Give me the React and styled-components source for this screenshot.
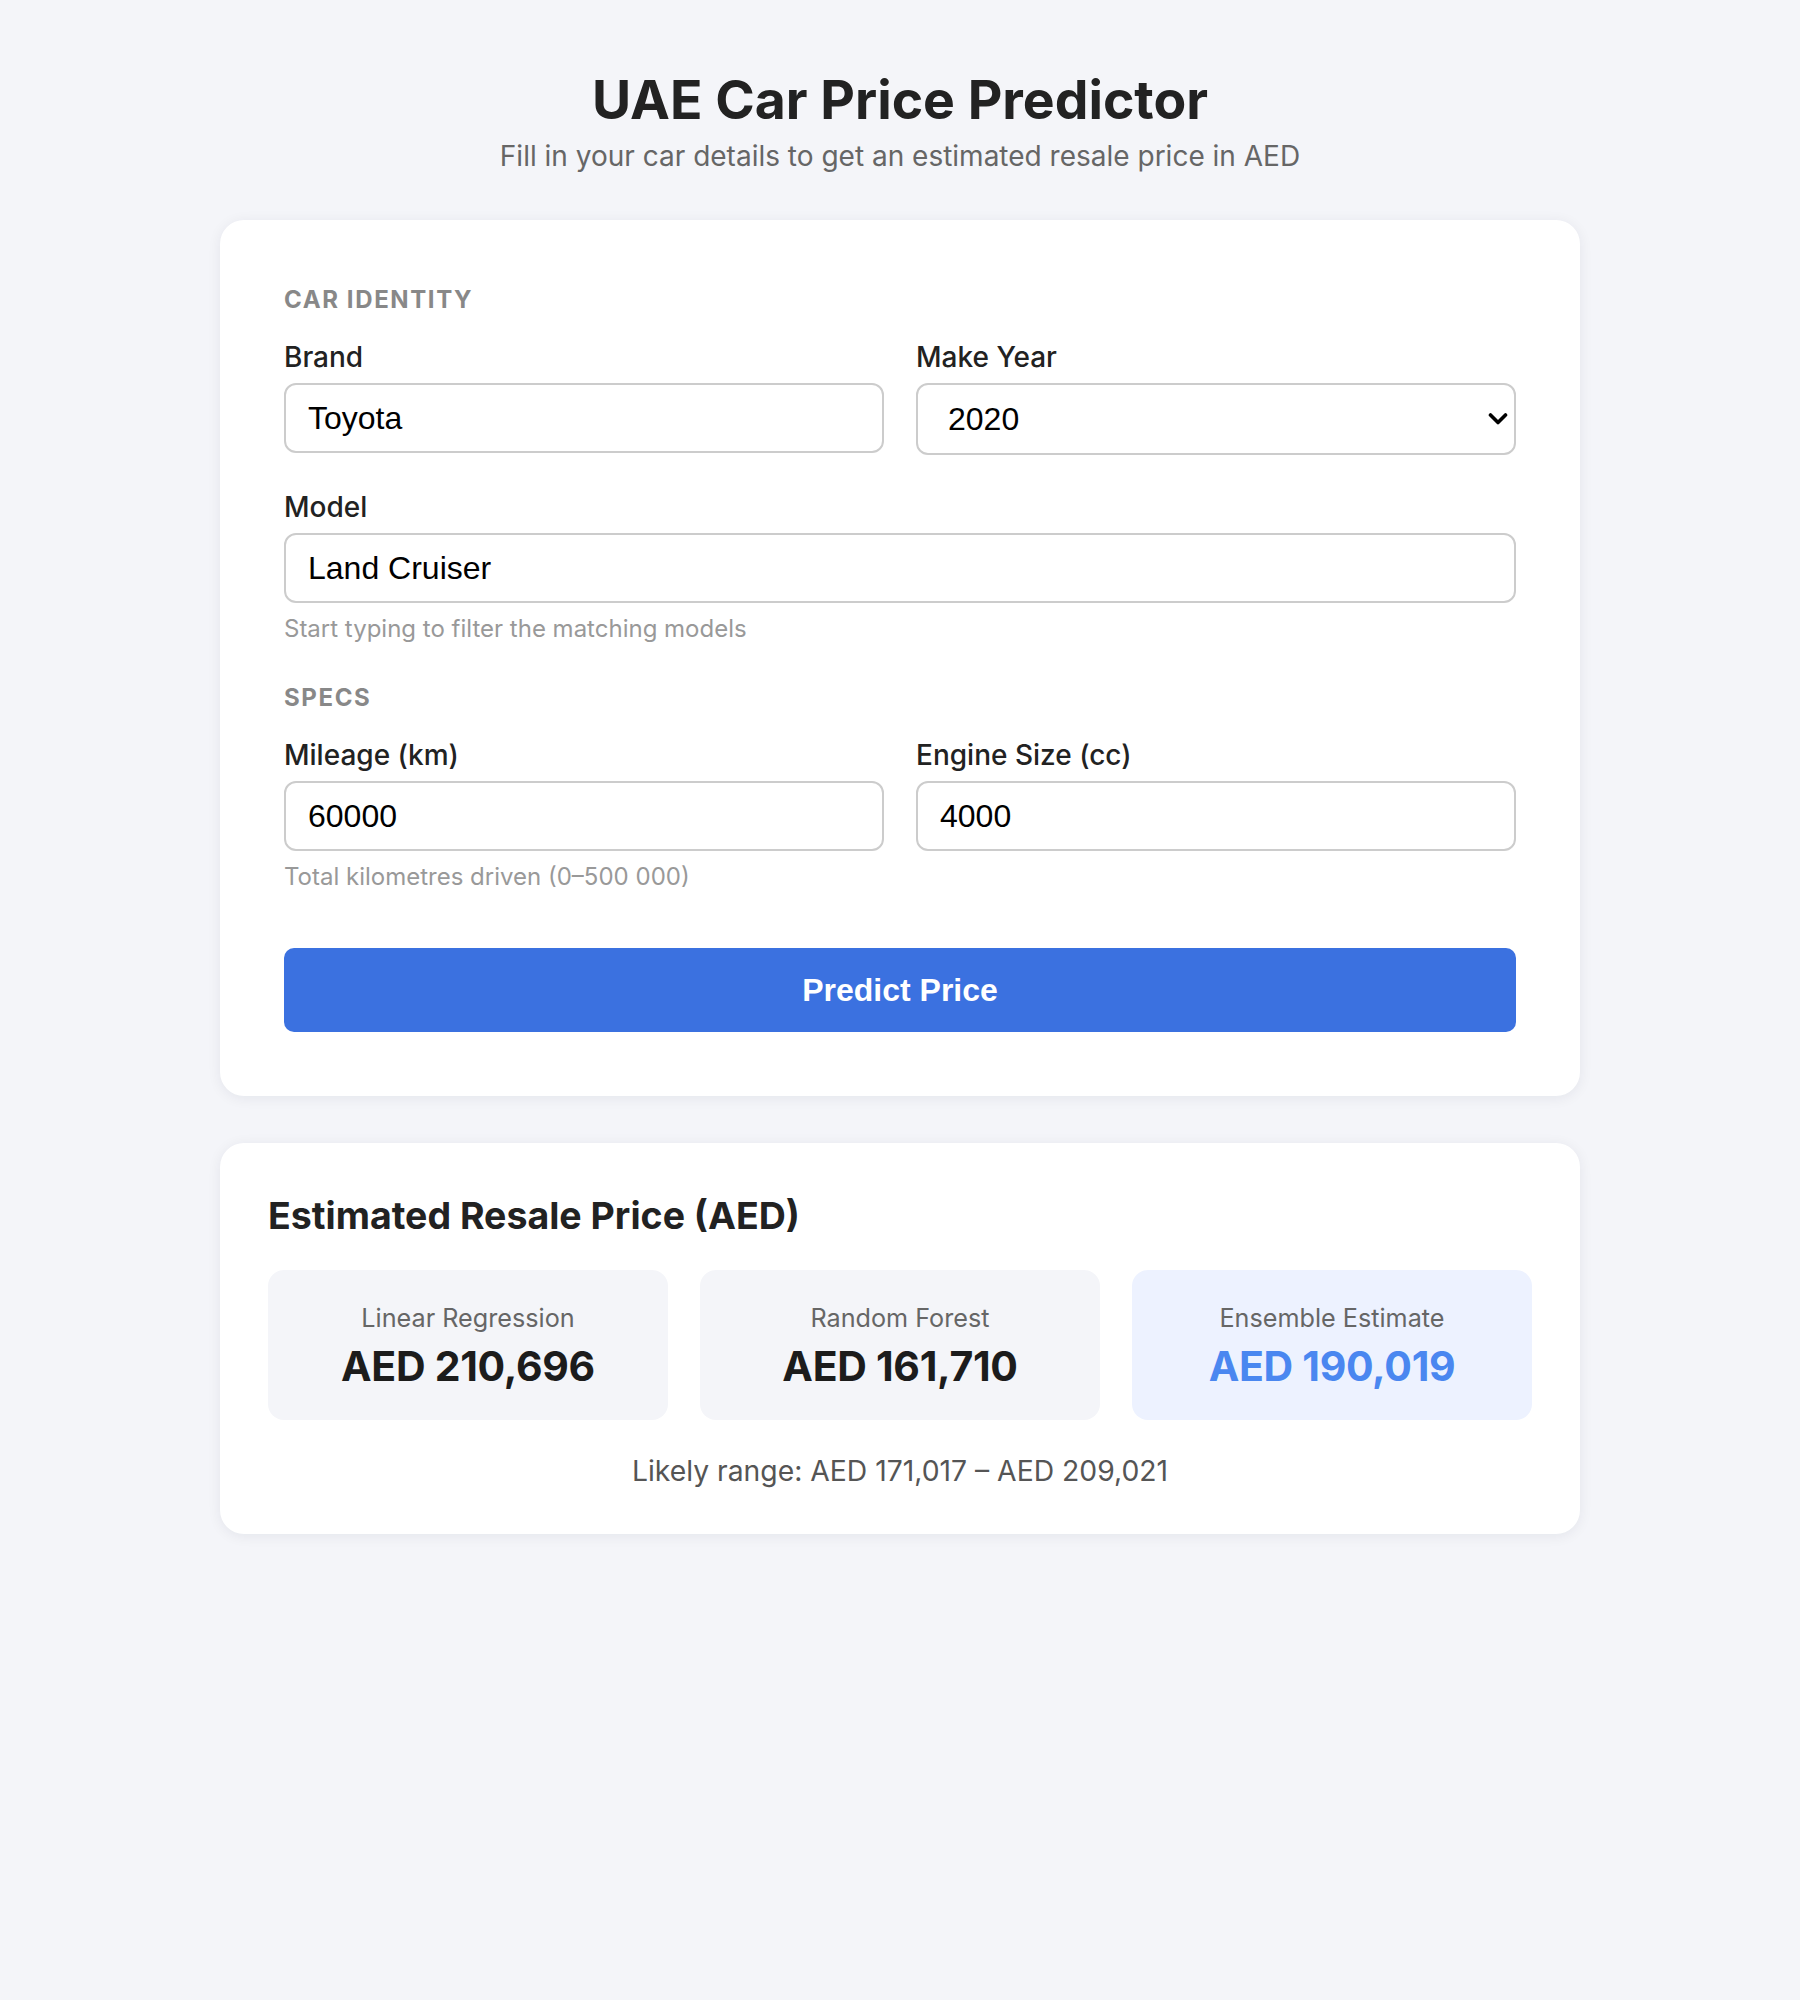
import React from "react";
import styled, { createGlobalStyle } from "styled-components";

const GlobalStyle = createGlobalStyle`
  html, body {
    margin: 0;
    padding: 0;
    background: #f4f5f9;
  }
  body {
    font-family: Inter, "Noto Sans", "Liberation Sans", sans-serif;
    color: #222;
    min-height: 2000px;
  }
  * { box-sizing: border-box; }
`;

const Page = styled.main`
  width: 1360px;
  margin: 0 auto;
  padding: 68px 0 80px;
`;

const Header = styled.header`
  text-align: center;
  margin-bottom: 47px;
`;

const Title = styled.h1`
  margin: 0;
  font-size: 53.5px;
  line-height: 63px;
  font-weight: 700;
  color: #222;
  letter-spacing: 0;
`;

const Subtitle = styled.p`
  margin: 8px 0 0;
  font-size: 28px;
  line-height: 34px;
  color: #666;
`;

const Card = styled.section`
  background: #fff;
  border-radius: 24px;
  box-shadow: 0 2px 14px rgba(20, 30, 60, 0.07);
  padding: ${(p) => p.$pad};
  & + & {
    margin-top: 47px;
  }
`;

const SectionTitle = styled.h2`
  margin: 0 0 26px;
  font-size: 24px;
  line-height: 28px;
  font-weight: 700;
  letter-spacing: 1.6px;
  color: #888;
  text-transform: uppercase;
`;

const Row = styled.div`
  display: grid;
  grid-template-columns: ${(p) => (p.$cols === 2 ? "1fr 1fr" : "1fr")};
  column-gap: 32px;
  align-items: start;
  margin-bottom: ${(p) => p.$mb || 0}px;
`;

const Field = styled.div`
  display: flex;
  flex-direction: column;
  min-width: 0;
`;

const Label = styled.label`
  font-size: 28px;
  line-height: 34px;
  font-weight: 500;
  color: #222;
  margin-bottom: 9px;
`;

const inputBase = `
  width: 100%;
  border: 2px solid #cccccc;
  border-radius: 12px;
  background: #fff;
  font-family: "Liberation Sans", Arial, sans-serif;
  font-size: 32px;
  color: #000;
  outline: none;
`;

const TextInput = styled.input`
  ${inputBase}
  height: 70px;
  padding: 0 22px;
`;

const SelectWrap = styled.div`
  position: relative;
`;

const Select = styled.select`
  ${inputBase}
  height: 72px;
  padding: 0 40px 0 30px;
  appearance: none;
  -webkit-appearance: none;
`;

const Chevron = styled.svg`
  position: absolute;
  right: 8px;
  top: 50%;
  transform: translateY(-50%);
  pointer-events: none;
`;

const Hint = styled.small`
  display: block;
  margin-top: 11px;
  font-size: 24px;
  line-height: 29px;
  color: #999;
`;

const PrimaryButton = styled.button`
  display: block;
  width: 100%;
  height: 84px;
  margin-top: 57px;
  border: none;
  border-radius: 10px;
  background: #3b71e0;
  color: #fff;
  font-family: "Liberation Sans", Arial, sans-serif;
  font-weight: 700;
  font-size: 32px;
  cursor: pointer;
`;

const ResultTitle = styled.h2`
  margin: 0 0 29px;
  font-size: 37.5px;
  line-height: 50px;
  font-weight: 700;
  color: #222;
`;

const ResultGrid = styled.div`
  display: grid;
  grid-template-columns: repeat(3, 1fr);
  gap: 32px;
`;

const ResultBox = styled.div`
  background: ${(p) => (p.$highlight ? "#edf2ff" : "#f4f5f9")};
  border-radius: 16px;
  padding: 32px 16px 30px;
  text-align: center;
`;

const ResultLabel = styled.div`
  font-size: 25.2px;
  line-height: 32px;
  color: #666;
`;

const ResultValue = styled.div`
  margin-top: 8px;
  font-size: 41px;
  line-height: 48px;
  font-weight: 700;
  color: ${(p) => (p.$highlight ? "#4a87f0" : "#1c1c1c")};
  letter-spacing: -0.3px;
`;

const Range = styled.p`
  margin: 34px 0 0;
  text-align: center;
  font-size: 28.3px;
  line-height: 34px;
  color: #555;
`;

const results = [
  { label: "Linear Regression", value: "AED 210,696" },
  { label: "Random Forest", value: "AED 161,710" },
  { label: "Ensemble Estimate", value: "AED 190,019", highlight: true },
];

export default function App() {
  return (
    <>
      <GlobalStyle />
      <Page>
        <Header>
          <Title>UAE Car Price Predictor</Title>
          <Subtitle>Fill in your car details to get an estimated resale price in AED</Subtitle>
        </Header>

        <Card $pad="66px 64px 64px">
          <SectionTitle>Car Identity</SectionTitle>
          <Row $cols={2} $mb={35}>
            <Field>
              <Label htmlFor="brand">Brand</Label>
              <TextInput id="brand" type="text" defaultValue="Toyota" />
            </Field>
            <Field>
              <Label htmlFor="year">Make Year</Label>
              <SelectWrap>
                <Select id="year" defaultValue="2020">
                  <option value="2021">2021</option>
                  <option value="2020">2020</option>
                  <option value="2019">2019</option>
                </Select>
                <Chevron width="20" height="14" viewBox="0 0 20 14">
                  <polyline
                    points="2.5,3 10,10.5 17.5,3"
                    fill="none"
                    stroke="#000"
                    strokeWidth="3.6"
                    strokeLinecap="round"
                    strokeLinejoin="round"
                  />
                </Chevron>
              </SelectWrap>
            </Field>
          </Row>
          <Row $mb={41}>
            <Field>
              <Label htmlFor="model">Model</Label>
              <TextInput id="model" type="text" defaultValue="Land Cruiser" />
              <Hint>Start typing to filter the matching models</Hint>
            </Field>
          </Row>

          <SectionTitle>Specs</SectionTitle>
          <Row $cols={2}>
            <Field>
              <Label htmlFor="mileage">Mileage (km)</Label>
              <TextInput id="mileage" type="text" defaultValue="60000" />
              <Hint>Total kilometres driven (0–500 000)</Hint>
            </Field>
            <Field>
              <Label htmlFor="engine">Engine Size (cc)</Label>
              <TextInput id="engine" type="text" defaultValue="4000" />
            </Field>
          </Row>

          <PrimaryButton type="button">Predict Price</PrimaryButton>
        </Card>

        <Card $pad="48px 48px 46px">
          <ResultTitle>Estimated Resale Price (AED)</ResultTitle>
          <ResultGrid>
            {results.map((r) => (
              <ResultBox key={r.label} $highlight={r.highlight}>
                <ResultLabel>{r.label}</ResultLabel>
                <ResultValue $highlight={r.highlight}>{r.value}</ResultValue>
              </ResultBox>
            ))}
          </ResultGrid>
          <Range>Likely range: AED 171,017 – AED 209,021</Range>
        </Card>
      </Page>
    </>
  );
}
